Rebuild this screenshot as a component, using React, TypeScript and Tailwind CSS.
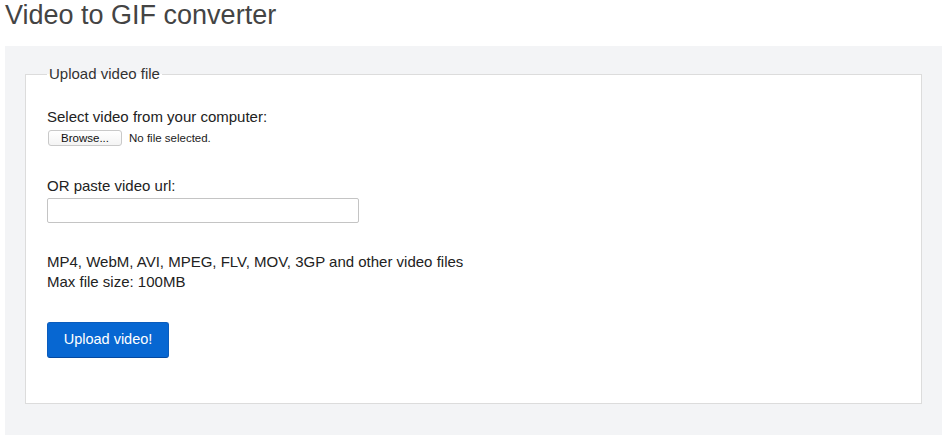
export default function App() {
  return (
    <div className="min-h-[443px] bg-white font-['Liberation_Sans',Arial,sans-serif] text-[#222]">
      <h1 className="pl-[5px] text-[27px] leading-[30px] font-normal text-[#444] mb-[16px]">
        Video to GIF converter
      </h1>

      <div className="ml-[5px] w-[937px] bg-[#f3f4f6] pt-[18px] pb-[31px] px-[20px]">
        <fieldset className="border border-[#dcdcdc] bg-white px-[21px] pb-[45px]">
          <legend className="px-[2px] text-[15px] leading-[20px] text-[#333]">Upload video file</legend>

          <div className="mt-[23px] flex flex-col">
            <label className="text-[15px] leading-[20px]">Select video from your computer:</label>
            <div className="mt-[3px] flex items-center gap-[7px]">
              <button className="ml-px h-[16px] w-[74px] rounded-[3px] border border-[#c9c9c9] bg-gradient-to-b from-white to-[#f4f4f4] text-[11.5px] leading-[14px] text-[#111]">
                Browse...
              </button>
              <span className="text-[11.5px] leading-[16px] text-[#222]">No file selected.</span>
            </div>

            <label className="mt-[30px] text-[15px] leading-[20px]">OR paste video url:</label>
            <input
              type="text"
              className="mt-[2px] h-[25px] w-[312px] rounded-[2px] border border-[#c4c4c4] bg-white px-2 text-[14px] outline-none"
            />

            <p className="mt-[29px] text-[15px] leading-[20px]">
              MP4, WebM, AVI, MPEG, FLV, MOV, 3GP and other video files
              <br />
              Max file size: 100MB
            </p>

            <button className="mt-[30px] h-[36px] w-[122px] rounded-[3px] border border-[#0a5cbd] border-b-[#0449a0] bg-[#0767d2] text-[14.5px] text-white">
              Upload video!
            </button>
          </div>
        </fieldset>
      </div>
    </div>
  );
}
